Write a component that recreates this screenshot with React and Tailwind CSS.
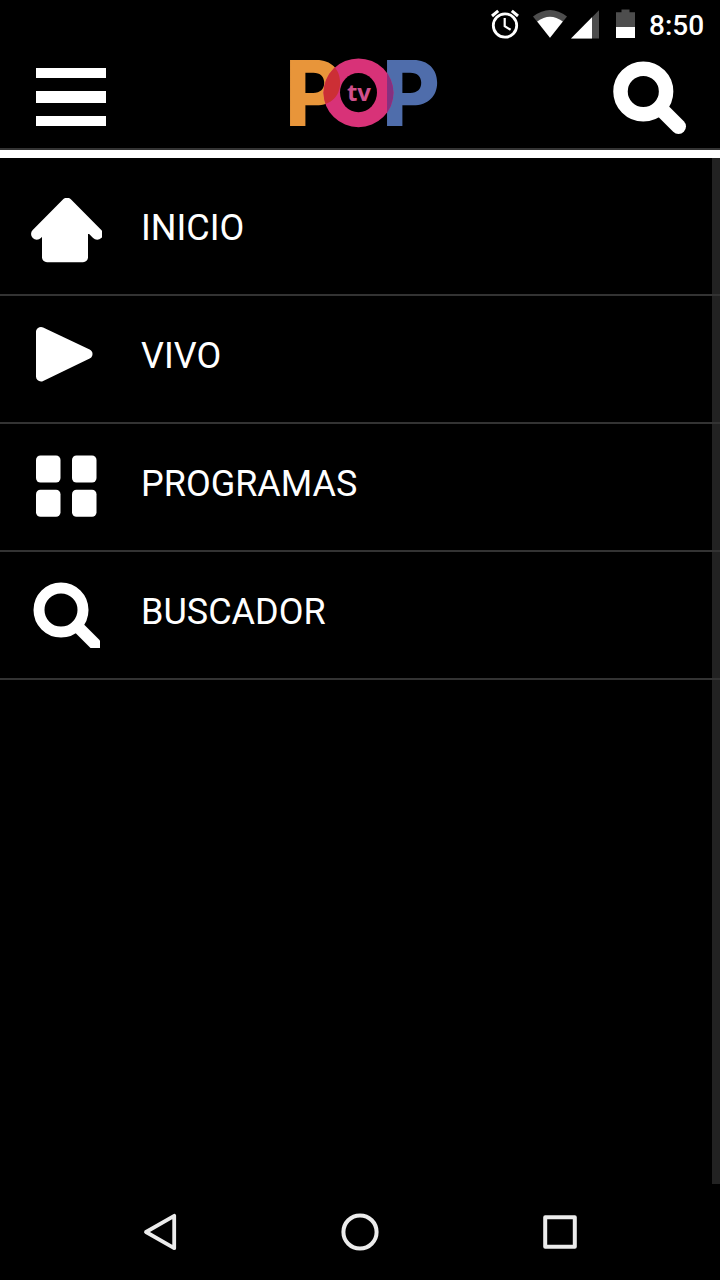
import { useState } from "react";

function HomeIcon() {
  return (
    <svg width="72" height="66" viewBox="0 0 72 66" fill="white">
      <path d="M6.8 36 37 5.5 67.2 36" stroke="white" strokeWidth="11.5" strokeLinecap="round" strokeLinejoin="round" />
      <rect x="12" y="30" width="46" height="34.2" rx="5" />
    </svg>
  );
}

function PlayIcon() {
  return (
    <svg width="72" height="66" viewBox="0 0 72 66" fill="white">
      <path d="M11 6V50.5L57.5 28Z" stroke="white" strokeWidth="10" strokeLinejoin="round" />
    </svg>
  );
}

function GridIcon() {
  return (
    <svg width="72" height="66" viewBox="0 0 72 66" fill="white">
      <rect x="6" y="1.5" width="24.5" height="27" rx="4.5" />
      <rect x="42" y="1.5" width="24.5" height="27" rx="4.5" />
      <rect x="6" y="35.7" width="24.5" height="27" rx="4.5" />
      <rect x="42" y="35.7" width="24.5" height="27" rx="4.5" />
    </svg>
  );
}

function FinderIcon() {
  return (
    <svg width="70" height="66" viewBox="0 0 70 66" fill="none" stroke="white">
      <circle cx="31" cy="28" r="22" strokeWidth="11" />
      <path d="M47 44 67 64" strokeWidth="12" strokeLinecap="round" />
    </svg>
  );
}

const items = [
  { label: "INICIO", Icon: HomeIcon },
  { label: "VIVO", Icon: PlayIcon },
  { label: "PROGRAMAS", Icon: GridIcon },
  { label: "BUSCADOR", Icon: FinderIcon }
];

function StatusBar() {
  return (
    <div className="flex h-12 shrink-0 items-center justify-end pr-4">
      <svg width="159" height="48" viewBox="0 0 159 48" fill="white">
        <g fill="none" stroke="white">
          <circle cx="15" cy="25.5" r="11.7" strokeWidth="2.8" />
          <path d="M14.7 18V26.2L20.6 29.8" strokeWidth="2.2" />
          <path d="M2 16 8.2 10.8M28 16 21.8 10.8" strokeWidth="3" />
        </g>
        <path d="M43 16.6Q60 3.4 77 16.6L60 37.8Z" fill="#4d4d4d" />
        <path d="M47.2 21.6Q60 12 72.8 21.6L60 37.8Z" />
        <path d="M81 38.5 109 10.2V38.5Z" fill="#4d4d4d" />
        <path d="M81 38.5 102 17.3V38.5Z" />
        <path d="M126 12.2H131.5V9.5H139.5V12.2H145V27H126Z" fill="#4d4d4d" />
        <rect x="126" y="27" width="19" height="11" />
      </svg>
      <span className="mt-[3px] w-[55px] whitespace-nowrap text-[28px] leading-none font-medium">8:50</span>
    </div>
  );
}

function Logo() {
  return (
    <svg width="180" height="100" viewBox="0 0 180 100" className="overflow-visible">
      <defs>
        <clipPath id="ring">
          <ellipse cx="89.5" cy="44.8" rx="35" ry="34.4" />
        </clipPath>
      </defs>
      <g fontFamily="Inter, sans-serif" fontSize="90.5" fontWeight="800">
        <text x="16" y="77.7" fill="#e8953a" textLength="58" lengthAdjust="spacingAndGlyphs">P</text>
        <text x="113" y="77.7" fill="#4f6dab" textLength="58" lengthAdjust="spacingAndGlyphs">P</text>
        <ellipse cx="89.5" cy="44.8" rx="35" ry="34.4" fill="#d83278" />
        <g clipPath="url(#ring)">
          <text x="16" y="77.7" fill="#cc2f35" textLength="58" lengthAdjust="spacingAndGlyphs">P</text>
          <text x="113" y="77.7" fill="#853080" textLength="58" lengthAdjust="spacingAndGlyphs">P</text>
        </g>
      </g>
      <ellipse cx="89.5" cy="44.6" rx="18.5" ry="19.6" fill="black" />
      <text x="90" y="53.2" textAnchor="middle" fill="#d0508c" fontFamily="Open Sans, sans-serif" fontSize="24" fontWeight="700">tv</text>
    </svg>
  );
}

function Header({ onToggle }) {
  return (
    <header className="flex h-[102px] shrink-0 items-start justify-between border-b-2 border-[#333333] pr-8 pl-9">
      <button onClick={onToggle} className="mt-5 flex h-[58px] w-[70px] flex-col justify-between">
        <span className="h-[10px] w-full bg-white" />
        <span className="h-3 w-full bg-white" />
        <span className="h-[10px] w-full bg-white" />
      </button>
      <Logo />
      <button className="mt-3">
        <svg width="76" height="76" viewBox="0 0 76 76" fill="none" stroke="white">
          <circle cx="31.3" cy="31.5" r="22.8" strokeWidth="14.5" />
          <path d="M48 48 66.5 66.5" strokeWidth="15" strokeLinecap="round" />
        </svg>
      </button>
    </header>
  );
}

function NavBar() {
  return (
    <nav className="flex h-24 shrink-0 items-center justify-between px-[140px]">
      <svg width="40" height="40" viewBox="0 0 40 40" fill="none" stroke="#ececec" strokeWidth="3.8" strokeLinejoin="round">
        <path d="M34.2 3.8V36.2L6 20Z" />
      </svg>
      <svg width="40" height="40" viewBox="0 0 40 40" fill="none" stroke="#ececec" strokeWidth="4">
        <circle cx="20" cy="20" r="16.6" />
      </svg>
      <svg width="40" height="40" viewBox="0 0 40 40" fill="none" stroke="#ececec" strokeWidth="4" strokeLinejoin="round">
        <rect x="5.2" y="5.2" width="29.6" height="29.6" />
      </svg>
    </nav>
  );
}

export default function App() {
  const [open, setOpen] = useState(true);

  return (
    <div className="flex h-screen w-full flex-col overflow-hidden bg-black font-[Roboto,sans-serif] text-white">
      <StatusBar />
      <Header onToggle={() => setOpen(!open)} />
      <main className="relative min-h-0 flex-1 border-t-8 border-white pt-[10px]">
        {/* scrollbar track */}
        <div className="absolute top-0 right-0 bottom-0 w-2 bg-[#222222]" />
        {open && items.map(({ label, Icon }) => (
          <button key={label} className="relative flex h-32 w-full items-start border-b-2 border-[#333333] pl-[30px]">
            <span className="mt-[30px] w-[111px]">
              <Icon />
            </span>
            <span className="mt-[39px] text-[36px] leading-[42px]">{label}</span>
          </button>
        ))}
      </main>
      <NavBar />
    </div>
  );
}
